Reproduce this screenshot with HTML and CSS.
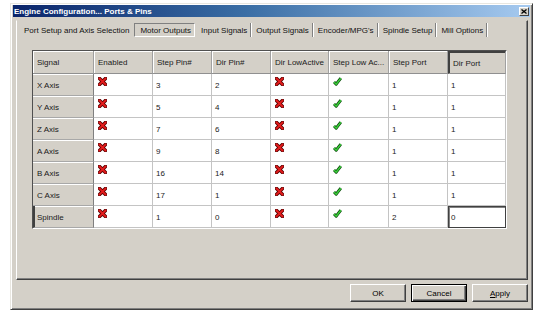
FILE: index.html
```html
<!DOCTYPE html>
<html>
<head>
    <title>Engine Configuration... Ports &amp; Pins</title>
    <link rel="stylesheet" href="styles.css">
</head>
<body>
    <svg class="defs" width="0" height="0">
        <symbol id="icon-x" viewBox="0 0 9 9">
            <path d="M1.5 1.5L7.5 7.5M7.5 1.5L1.5 7.5" stroke="#5a0000" stroke-width="3.6" stroke-linecap="square"/>
            <path d="M1.5 1.5L7.5 7.5M7.5 1.5L1.5 7.5" stroke="#e41c1c" stroke-width="1.8" stroke-linecap="square"/>
        </symbol>
        <symbol id="icon-ok" viewBox="0 0 9 9">
            <path d="M1 5L3.2 7.2L7.8 1.2" fill="none" stroke="#0a4a0a" stroke-width="3" stroke-linejoin="round"/>
            <path d="M1 5L3.2 7.2L7.8 1.2" fill="none" stroke="#3ccf3c" stroke-width="1.4" stroke-linejoin="round"/>
        </symbol>
    </svg>

    <div class="window">
        <div class="titlebar">
            <span>Engine Configuration... Ports &amp; Pins</span>
            <span class="close">
                <svg width="6" height="5" viewBox="0 0 6 5"><path d="M0.5 0.5L5.5 4.5M5.5 0.5L0.5 4.5" stroke="#000" stroke-width="1.3"/></svg>
            </span>
        </div>

        <div class="tabpanel">
            <div class="tabs">
                <span class="tab">Port Setup and Axis Selection</span>
                <span class="tab active">Motor Outputs</span>
                <span class="tab">Input Signals</span>
                <span class="tab">Output Signals</span>
                <span class="tab">Encoder/MPG's</span>
                <span class="tab">Spindle Setup</span>
                <span class="tab">Mill Options</span>
            </div>

            <div class="grid">
                <div class="hd">Signal</div>
                <div class="hd">Enabled</div>
                <div class="hd">Step Pin#</div>
                <div class="hd">Dir Pin#</div>
                <div class="hd">Dir LowActive</div>
                <div class="hd">Step Low Ac...</div>
                <div class="hd">Step Port</div>
                <div class="hd current">Dir Port</div>

                <!-- X Axis -->
                <div class="fx">X Axis</div>
                <div class="cell icon"><svg><use href="#icon-x"/></svg></div>
                <div class="cell">3</div>
                <div class="cell">2</div>
                <div class="cell icon"><svg><use href="#icon-x"/></svg></div>
                <div class="cell icon"><svg><use href="#icon-ok"/></svg></div>
                <div class="cell">1</div>
                <div class="cell">1</div>

                <!-- Y Axis -->
                <div class="fx">Y Axis</div>
                <div class="cell icon"><svg><use href="#icon-x"/></svg></div>
                <div class="cell">5</div>
                <div class="cell">4</div>
                <div class="cell icon"><svg><use href="#icon-x"/></svg></div>
                <div class="cell icon"><svg><use href="#icon-ok"/></svg></div>
                <div class="cell">1</div>
                <div class="cell">1</div>

                <!-- Z Axis -->
                <div class="fx">Z Axis</div>
                <div class="cell icon"><svg><use href="#icon-x"/></svg></div>
                <div class="cell">7</div>
                <div class="cell">6</div>
                <div class="cell icon"><svg><use href="#icon-x"/></svg></div>
                <div class="cell icon"><svg><use href="#icon-ok"/></svg></div>
                <div class="cell">1</div>
                <div class="cell">1</div>

                <!-- A Axis -->
                <div class="fx">A Axis</div>
                <div class="cell icon"><svg><use href="#icon-x"/></svg></div>
                <div class="cell">9</div>
                <div class="cell">8</div>
                <div class="cell icon"><svg><use href="#icon-x"/></svg></div>
                <div class="cell icon"><svg><use href="#icon-ok"/></svg></div>
                <div class="cell">1</div>
                <div class="cell">1</div>

                <!-- B Axis -->
                <div class="fx">B Axis</div>
                <div class="cell icon"><svg><use href="#icon-x"/></svg></div>
                <div class="cell">16</div>
                <div class="cell">14</div>
                <div class="cell icon"><svg><use href="#icon-x"/></svg></div>
                <div class="cell icon"><svg><use href="#icon-ok"/></svg></div>
                <div class="cell">1</div>
                <div class="cell">1</div>

                <!-- C Axis -->
                <div class="fx">C Axis</div>
                <div class="cell icon"><svg><use href="#icon-x"/></svg></div>
                <div class="cell">17</div>
                <div class="cell">1</div>
                <div class="cell icon"><svg><use href="#icon-x"/></svg></div>
                <div class="cell icon"><svg><use href="#icon-ok"/></svg></div>
                <div class="cell">1</div>
                <div class="cell">1</div>

                <!-- Spindle -->
                <div class="fx row-current">Spindle</div>
                <div class="cell icon"><svg><use href="#icon-x"/></svg></div>
                <div class="cell">1</div>
                <div class="cell">0</div>
                <div class="cell icon"><svg><use href="#icon-x"/></svg></div>
                <div class="cell icon"><svg><use href="#icon-ok"/></svg></div>
                <div class="cell">2</div>
                <div class="cell focus">0</div>
            </div>
        </div>

        <div class="buttons">
            <button class="btn">OK</button>
            <button class="btn default">Cancel</button>
            <button class="btn"><u>A</u>pply</button>
        </div>
    </div>
</body>
</html>
```

FILE: styles.css
```css
body {
    margin: 0;
    background-color: #ffffff;
    font-family: "Liberation Sans", Arial, sans-serif;
    font-size: 8px;
    color: #000;
}

.defs {
    position: absolute;
}

.window {
    margin: 3px 0 0 10px;
    width: 523px;
    height: 307px;
    box-sizing: border-box;
    padding: 1px 2px 2px 2px;
    background-color: #d4d0c8;
    border: 1px solid;
    border-color: #e8e6e0 #404040 #404040 #e8e6e0;
    box-shadow: inset 1px 1px #ffffff, inset -1px -1px #808080;
}

.titlebar {
    height: 12px;
    display: flex;
    align-items: center;
    justify-content: space-between;
    padding-left: 1px;
    background: linear-gradient(to right, #0a246a, #3a6ea5 45%, #a6caf0);
    color: #ffffff;
    font-weight: bold;
    font-size: 8px;
}

.close {
    width: 10px;
    height: 9px;
    margin-right: 1px;
    box-sizing: border-box;
    display: flex;
    align-items: center;
    justify-content: center;
    background-color: #d4d0c8;
    border: 1px solid;
    border-color: #ffffff #404040 #404040 #ffffff;
}

/* tab control */
.tabpanel {
    margin: 3px 2px 0 3px;
    height: 260px;
    box-sizing: border-box;
    border: 1px solid;
    border-color: #d4d0c8 #404040 #404040 #ffffff;
    box-shadow: inset -1px -1px #808080;
    padding-top: 2px;
}

.tabs {
    display: flex;
    height: 14px;
    padding-left: 3px;
}

.tab {
    display: flex;
    align-items: center;
    padding: 0 3px 0 4px;
    border-right: 1px solid #808080;
    box-shadow: 1px 0 #ffffff;
    margin-right: 1px;
    white-space: nowrap;
    color: #111;
}

.tab:first-child {
    border-right-color: transparent;
    box-shadow: none;
}

.tab.active {
    border: 1px solid;
    border-color: #808080 #ffffff #ffffff #808080;
    box-shadow: none;
    margin-right: 2px;
    padding: 0 3px 0 5px;
}

/* signal grid */
.grid {
    display: grid;
    grid-template-columns: 61px 59px 59px 59px 58px 60px 59px 58px;
    grid-template-rows: 23px repeat(7, 22px);
    width: max-content;
    margin: 13px 0 0 15px;
    border: 1px solid;
    border-color: #505050 #ffffff #ffffff #505050;
    color: #1a1a1a;
}

.hd, .fx, .cell {
    display: flex;
    align-items: center;
    box-sizing: border-box;
    padding: 1px 0 0 4px;
    white-space: nowrap;
    overflow: hidden;
}

.hd {
    background-color: #d4d0c8;
    border-right: 1px solid #a0a0a0;
    border-bottom: 1px solid #909090;
    box-shadow: inset 1px 1px #ffffff;
}

.hd.current {
    border-top: 1px solid #404040;
    border-left: 1px solid #404040;
    box-shadow: inset 1px 1px #404040;
}

.fx {
    background-color: #d4d0c8;
    border-right: 1px solid #808080;
    border-bottom: 1px solid #a8a8a8;
    box-shadow: inset 0 1px #ffffff;
}

.fx.row-current {
    border-left: 2px solid #404040;
    padding-left: 2px;
}

.cell {
    background-color: #ffffff;
    border-right: 1px solid #c4c4c4;
    border-bottom: 1px solid #c4c4c4;
    padding-left: 3px;
}

.cell.icon {
    align-items: flex-start;
    padding: 3px 0 0 4px;
}

.cell.icon svg {
    width: 9px;
    height: 9px;
}

.cell.focus {
    border: 1px solid #404040;
    box-shadow: inset 1px 1px #808080;
    padding-left: 2px;
}

/* dialog buttons */
.buttons {
    display: flex;
    justify-content: flex-end;
    gap: 5px;
    margin-top: 4px;
    padding-right: 2px;
}

.btn {
    width: 56px;
    height: 18px;
    padding: 0;
    font-family: "Liberation Sans", Arial, sans-serif;
    font-size: 8px;
    color: #000;
    background-color: #d4d0c8;
    border: 1px solid;
    border-color: #ffffff #404040 #404040 #ffffff;
    box-shadow: inset -1px -1px #808080;
}

.btn.default {
    border-color: #000;
    box-shadow: inset 1px 1px #ffffff, inset -1px -1px #404040, inset -2px -2px #808080;
}
```
